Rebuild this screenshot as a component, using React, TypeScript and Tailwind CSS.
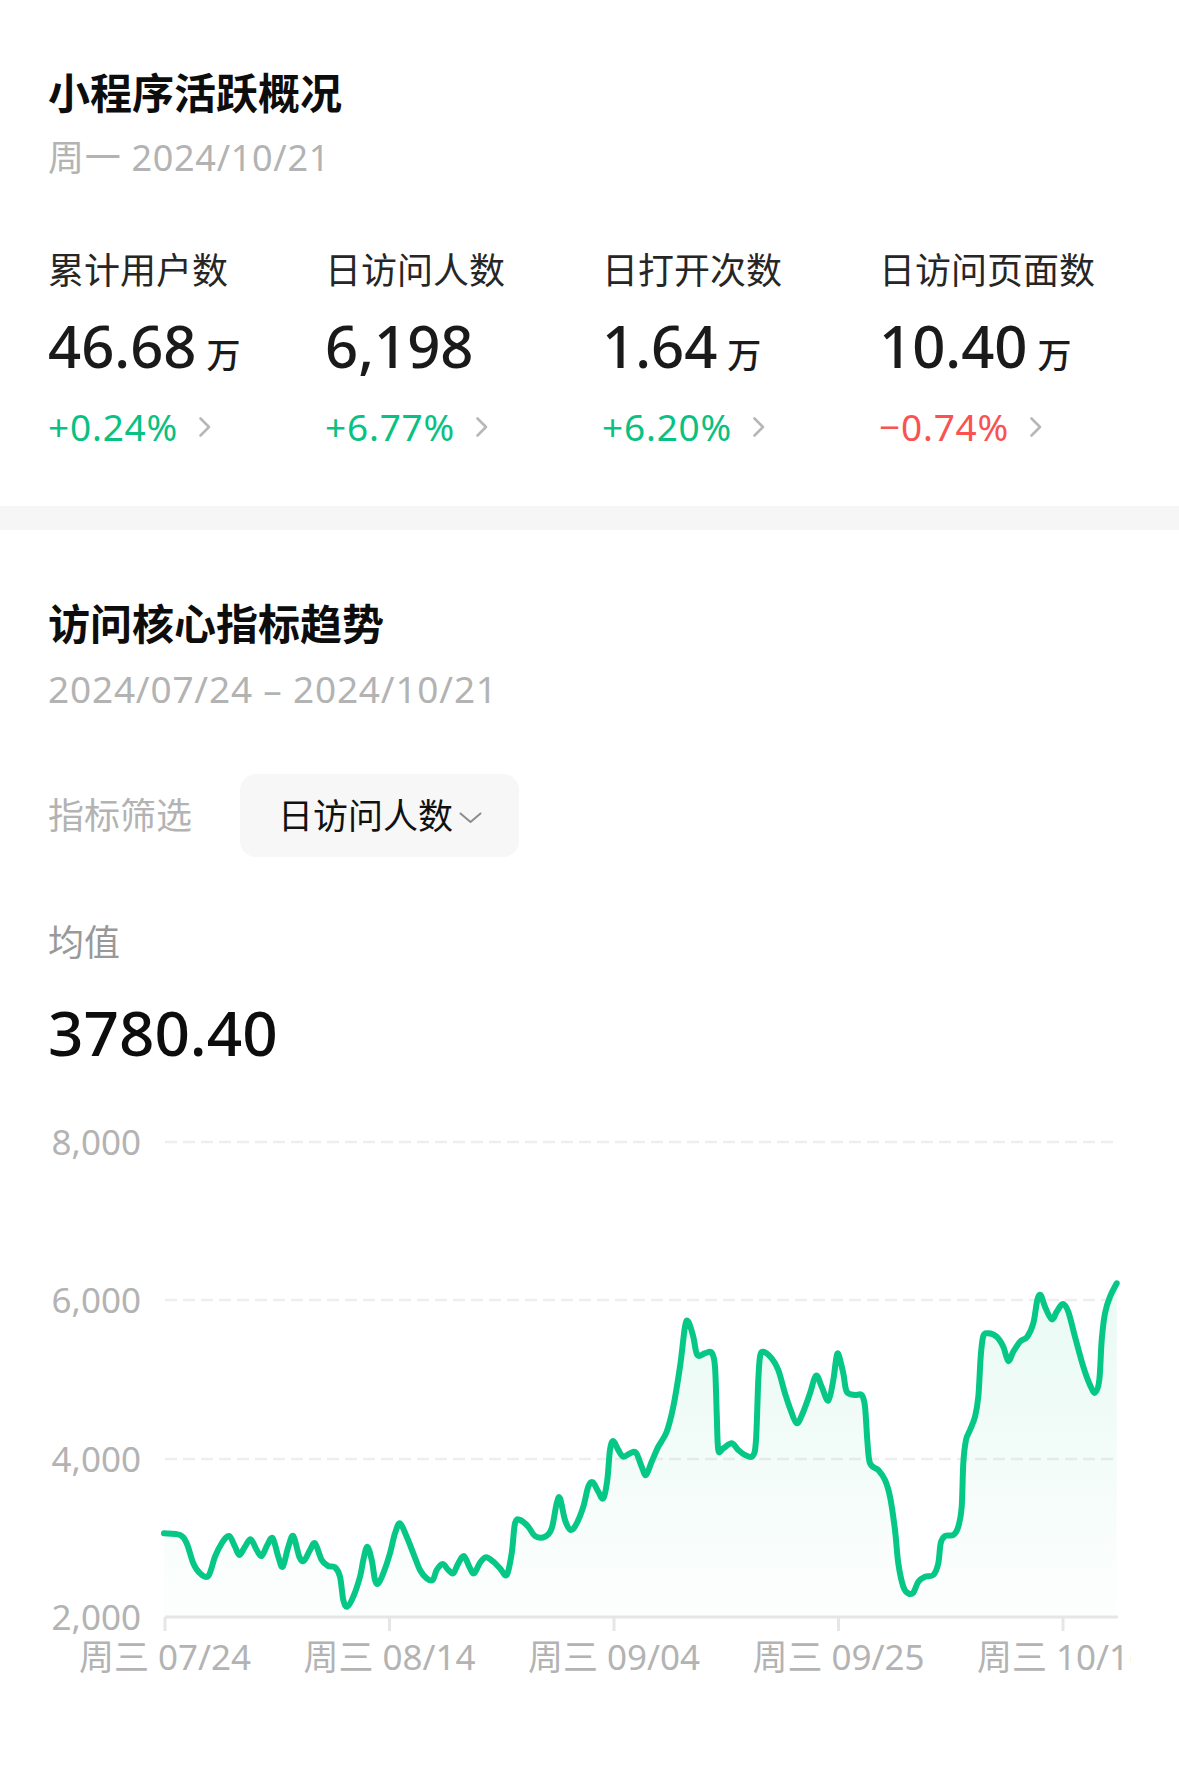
import React from "react";

type Pt = [number, number];

const PTS: Pt[] = [
  [164, 1533.3], [180, 1535], [186.7, 1543.3], [193.3, 1563.3], [200, 1573.3], [208.3, 1576],
  [215, 1556.7], [221.7, 1543.3], [229, 1536], [235, 1546.7], [239.3, 1555], [245, 1546.7],
  [250.7, 1539.3], [256.7, 1550], [261.7, 1556], [267.3, 1545], [272.7, 1538.3], [278.3, 1556.7],
  [282.7, 1566.7], [288.3, 1546.7], [293.3, 1536], [299.3, 1556.7], [304, 1560.7], [310, 1550],
  [315, 1543.3], [321.7, 1560], [328.3, 1566], [335, 1567.3], [340, 1576.7], [343.3, 1600],
  [347.3, 1606.7], [353.3, 1596.7], [360, 1576.7], [363.3, 1560], [367.3, 1546.7], [371.7, 1560],
  [375, 1580], [378.3, 1583.3], [383.3, 1573.3], [390, 1553.3], [395, 1533.3], [400, 1523.3],
  [406.7, 1536.7], [413.3, 1553.3], [420, 1570], [426.7, 1578.3], [432.7, 1580], [436.7, 1570],
  [442.7, 1564], [448.3, 1570], [453.3, 1573.3], [458.3, 1563.3], [464, 1556], [469.3, 1566.7],
  [474, 1573.3], [480, 1562.7], [486, 1557.3], [493.3, 1561.7], [500, 1568.3], [506.7, 1575],
  [511.7, 1553.3], [515, 1523.3], [520, 1520], [528.3, 1526.7], [535, 1536], [545, 1536.7],
  [551.7, 1528.3], [556.7, 1503.3], [560, 1498.3], [565, 1520], [570.7, 1530], [576.7, 1523.3],
  [583.3, 1506.7], [588.3, 1486.7], [592.7, 1482.3], [598.3, 1491.7], [603.3, 1498.3], [607.3, 1480],
  [610, 1450], [613.3, 1441], [618.3, 1450], [623.3, 1456.7], [630, 1453.3], [636, 1452.7],
  [641.7, 1466.7], [646, 1475], [651.7, 1461.7], [658.3, 1446.7], [666.7, 1431.7], [673.3, 1406.7],
  [680, 1366.7], [685, 1326.7], [688.3, 1321.7], [693.3, 1336.7], [697.3, 1355], [705, 1353.3],
  [711.7, 1352.7], [715, 1366.7], [716.7, 1413.3], [718.3, 1450], [723.3, 1448.3], [731.7, 1443.3],
  [738.3, 1450], [745, 1455], [752.7, 1456], [756, 1440], [758.3, 1380], [760, 1356.7],
  [763.3, 1351.7], [771.7, 1358.3], [778.3, 1370], [785, 1393.3], [790, 1408.3], [796.7, 1423.3],
  [803.3, 1411.7], [810, 1393.3], [816, 1375.7], [821.7, 1386.7], [828.3, 1400.7], [833.3, 1380],
  [836, 1360], [838.3, 1354], [843.3, 1373.3], [846.7, 1391.7], [855, 1395], [861.7, 1395],
  [865, 1406.7], [867.3, 1440], [870, 1463.3], [878.3, 1470], [885, 1480], [890, 1496.7],
  [895, 1530], [898.3, 1563.3], [903.3, 1586.7], [908.3, 1593.3], [913.3, 1592.7], [918.3, 1581.7],
  [925, 1576.7], [933.3, 1575], [938.3, 1563.3], [940.7, 1543.3], [945, 1536], [953.3, 1535],
  [958.3, 1526.7], [961.7, 1506.7], [963.3, 1463.3], [966, 1440], [970, 1430], [975, 1416.7],
  [978.3, 1396.7], [980.7, 1356.7], [983.3, 1336], [988.3, 1333.3], [996.7, 1336.7], [1003.3, 1346.7],
  [1008.3, 1361], [1013.3, 1351.7], [1020, 1341.7], [1027.3, 1336.7], [1033.3, 1323.3], [1037.3, 1300],
  [1040.7, 1295], [1045, 1306.7], [1051.7, 1319.3], [1056.7, 1311.7], [1062.7, 1304], [1068.3, 1311.7],
  [1075, 1336.7], [1083.3, 1366.7], [1090, 1385], [1095, 1392.7], [1099.3, 1380], [1101.7, 1340],
  [1105, 1313.3], [1110, 1296.7], [1116.7, 1283.3],
];

function smoothPath(pts: Pt[]): string {
  let d = `M${pts[0][0]},${pts[0][1]}`;
  for (let i = 0; i < pts.length - 1; i++) {
    const p0 = pts[i - 1] || pts[i];
    const p1 = pts[i];
    const p2 = pts[i + 1];
    const p3 = pts[i + 2] || p2;
    const t = 6;
    const c1x = p1[0] + (p2[0] - p0[0]) / t;
    const c1y = p1[1] + (p2[1] - p0[1]) / t;
    const c2x = p2[0] - (p3[0] - p1[0]) / t;
    const c2y = p2[1] - (p3[1] - p1[1]) / t;
    d += ` C${c1x.toFixed(1)},${c1y.toFixed(1)} ${c2x.toFixed(1)},${c2y.toFixed(1)} ${p2[0]},${p2[1]}`;
  }
  return d;
}

const metrics = [
  { label: "累计用户数", value: "46.68", unit: "万", pct: "+0.24%", up: true },
  { label: "日访问人数", value: "6,198", unit: "", pct: "+6.77%", up: true },
  { label: "日打开次数", value: "1.64", unit: "万", pct: "+6.20%", up: true },
  { label: "日访问页面数", value: "10.40", unit: "万", pct: "−0.74%", up: false },
];

function ChevronRight() {
  return (
    <svg width="14" height="22" viewBox="0 0 14 22" className="ml-[20px] shrink-0">
      <path d="M2.5 2.5 L11 11 L2.5 19.5" fill="none" stroke="#b7b7b7" strokeWidth="2.6" strokeLinecap="round" strokeLinejoin="round" />
    </svg>
  );
}

function Chart() {
  const line = smoothPath(PTS);
  const first = PTS[0];
  const last = PTS[PTS.length - 1];
  const area = `${line} L${last[0]},1617 L${first[0]},1617 Z`;
  const grid = [
    { y: 1142, label: "8,000" },
    { y: 1300, label: "6,000" },
    { y: 1459, label: "4,000" },
  ];
  const ticks = [
    { x: 165, label: "周三 07/24" },
    { x: 389.5, label: "周三 08/14" },
    { x: 614, label: "周三 09/04" },
    { x: 838.5, label: "周三 09/25" },
    { x: 1063, label: "周三 10/16" },
  ];
  const font = "'Noto Sans','Noto Sans CJK SC',sans-serif";
  return (
    <svg width="1083" height="600" viewBox="48 1100 1083 600" className="block overflow-hidden">
      <defs>
        <linearGradient id="fillg" x1="0" y1="1283" x2="0" y2="1617" gradientUnits="userSpaceOnUse">
          <stop offset="0" stopColor="#07c585" stopOpacity="0.09" />
          <stop offset="1" stopColor="#07c585" stopOpacity="0.01" />
        </linearGradient>
      </defs>
      {grid.map((g) => (
        <g key={g.label}>
          <line x1="165" y1={g.y} x2="1114" y2={g.y} stroke="#eeeeee" strokeWidth="2.6" strokeDasharray="12 6" />
          <text x="141" y={g.y + 12.5} textAnchor="end" fontSize="35" fill="#b3b3b3" fontFamily={font}>
            {g.label}
          </text>
        </g>
      ))}
      <text x="141" y={1617 + 12.5} textAnchor="end" fontSize="35" fill="#b3b3b3" fontFamily={font}>
        2,000
      </text>
      <path d={area} fill="url(#fillg)" />
      <line x1="165" y1="1617" x2="1118" y2="1617" stroke="#e6e6e6" strokeWidth="3" />
      {ticks.map((t) => (
        <g key={t.label}>
          <line x1={t.x} y1="1617" x2={t.x} y2="1631" stroke="#e6e6e6" strokeWidth="3" />
          <text x={t.x} y="1670" textAnchor="middle" fontSize="35" fill="#b3b3b3" fontFamily={font}>
            {t.label}
          </text>
        </g>
      ))}
      <path d={line} fill="none" stroke="#06c785" strokeWidth="6" strokeLinecap="round" strokeLinejoin="round" />
    </svg>
  );
}

export default function App() {
  return (
    <div className="w-[1179px] min-h-[1785px] bg-white font-['Noto_Sans','Noto_Sans_CJK_SC',sans-serif] text-[#1a1a1a]">
      <section className="px-[48px] pt-[65px] pb-[57px]">
        <h1 className="text-[42px] leading-[56px] font-semibold text-[#0d0d0d]">小程序活跃概况</h1>
        <p className="mt-[13px] text-[36px] leading-[48px] tracking-[0.7px] text-[#b3b3b3]">周一 2024/10/21</p>
        <div className="mt-[65px] grid grid-cols-[277px_277px_277px_1fr]">
          {metrics.map((m) => (
            <div key={m.label}>
              <div className="text-[36px] leading-[48px] text-[#262626] whitespace-nowrap">{m.label}</div>
              <div className="mt-[17px] flex items-baseline h-[68px]">
                <span className="text-[58px] leading-[68px] font-medium text-[#1a1a1a]">{m.value}</span>
                {m.unit ? (
                  <span className="ml-[10px] text-[34px] leading-[68px] font-medium text-[#1a1a1a]">{m.unit}</span>
                ) : null}
              </div>
              <div className="mt-[25px] flex items-center h-[44px]">
                <span
                  className={
                    m.up
                      ? "text-[37px] leading-[44px] tracking-[0.8px] text-[#08c182]"
                      : "text-[37px] leading-[44px] tracking-[0.8px] text-[#fa5151]"
                  }
                >
                  {m.pct}
                </span>
                <ChevronRight />
              </div>
            </div>
          ))}
        </div>
      </section>
      <div className="h-[24px] bg-[#f6f6f6]" />
      <section className="px-[48px] pt-[66px]">
        <h2 className="text-[42px] leading-[56px] font-semibold text-[#0d0d0d]">访问核心指标趋势</h2>
        <p className="mt-[13px] text-[37px] leading-[48px] tracking-[0.8px] text-[#b3b3b3]">2024/07/24 – 2024/10/21</p>
        <div className="mt-[61px] flex items-center h-[83px]">
          <span className="w-[192px] text-[36px] leading-[48px] text-[#b3b3b3]">指标筛选</span>
          <div className="flex items-center h-[83px] w-[279px] rounded-[16px] bg-[#f7f7f7] pl-[38px]">
            <span className="text-[35px] leading-[48px] text-[#111]">日访问人数</span>
            <svg width="23" height="12" viewBox="0 0 23 12" className="ml-[6px] mt-[4px]">
              <path d="M1.5 1.5 L11.5 10 L21.5 1.5" fill="none" stroke="#8c8c8c" strokeWidth="2" strokeLinecap="round" strokeLinejoin="round" />
            </svg>
          </div>
        </div>
        <div className="mt-[62px] text-[36px] leading-[48px] text-[#999999]">均值</div>
        <div className="mt-[30px] text-[62px] leading-[70px] font-medium text-[#0d0d0d]">3780.40</div>
        <div className="mt-[33px]">
          <Chart />
        </div>
      </section>
    </div>
  );
}
